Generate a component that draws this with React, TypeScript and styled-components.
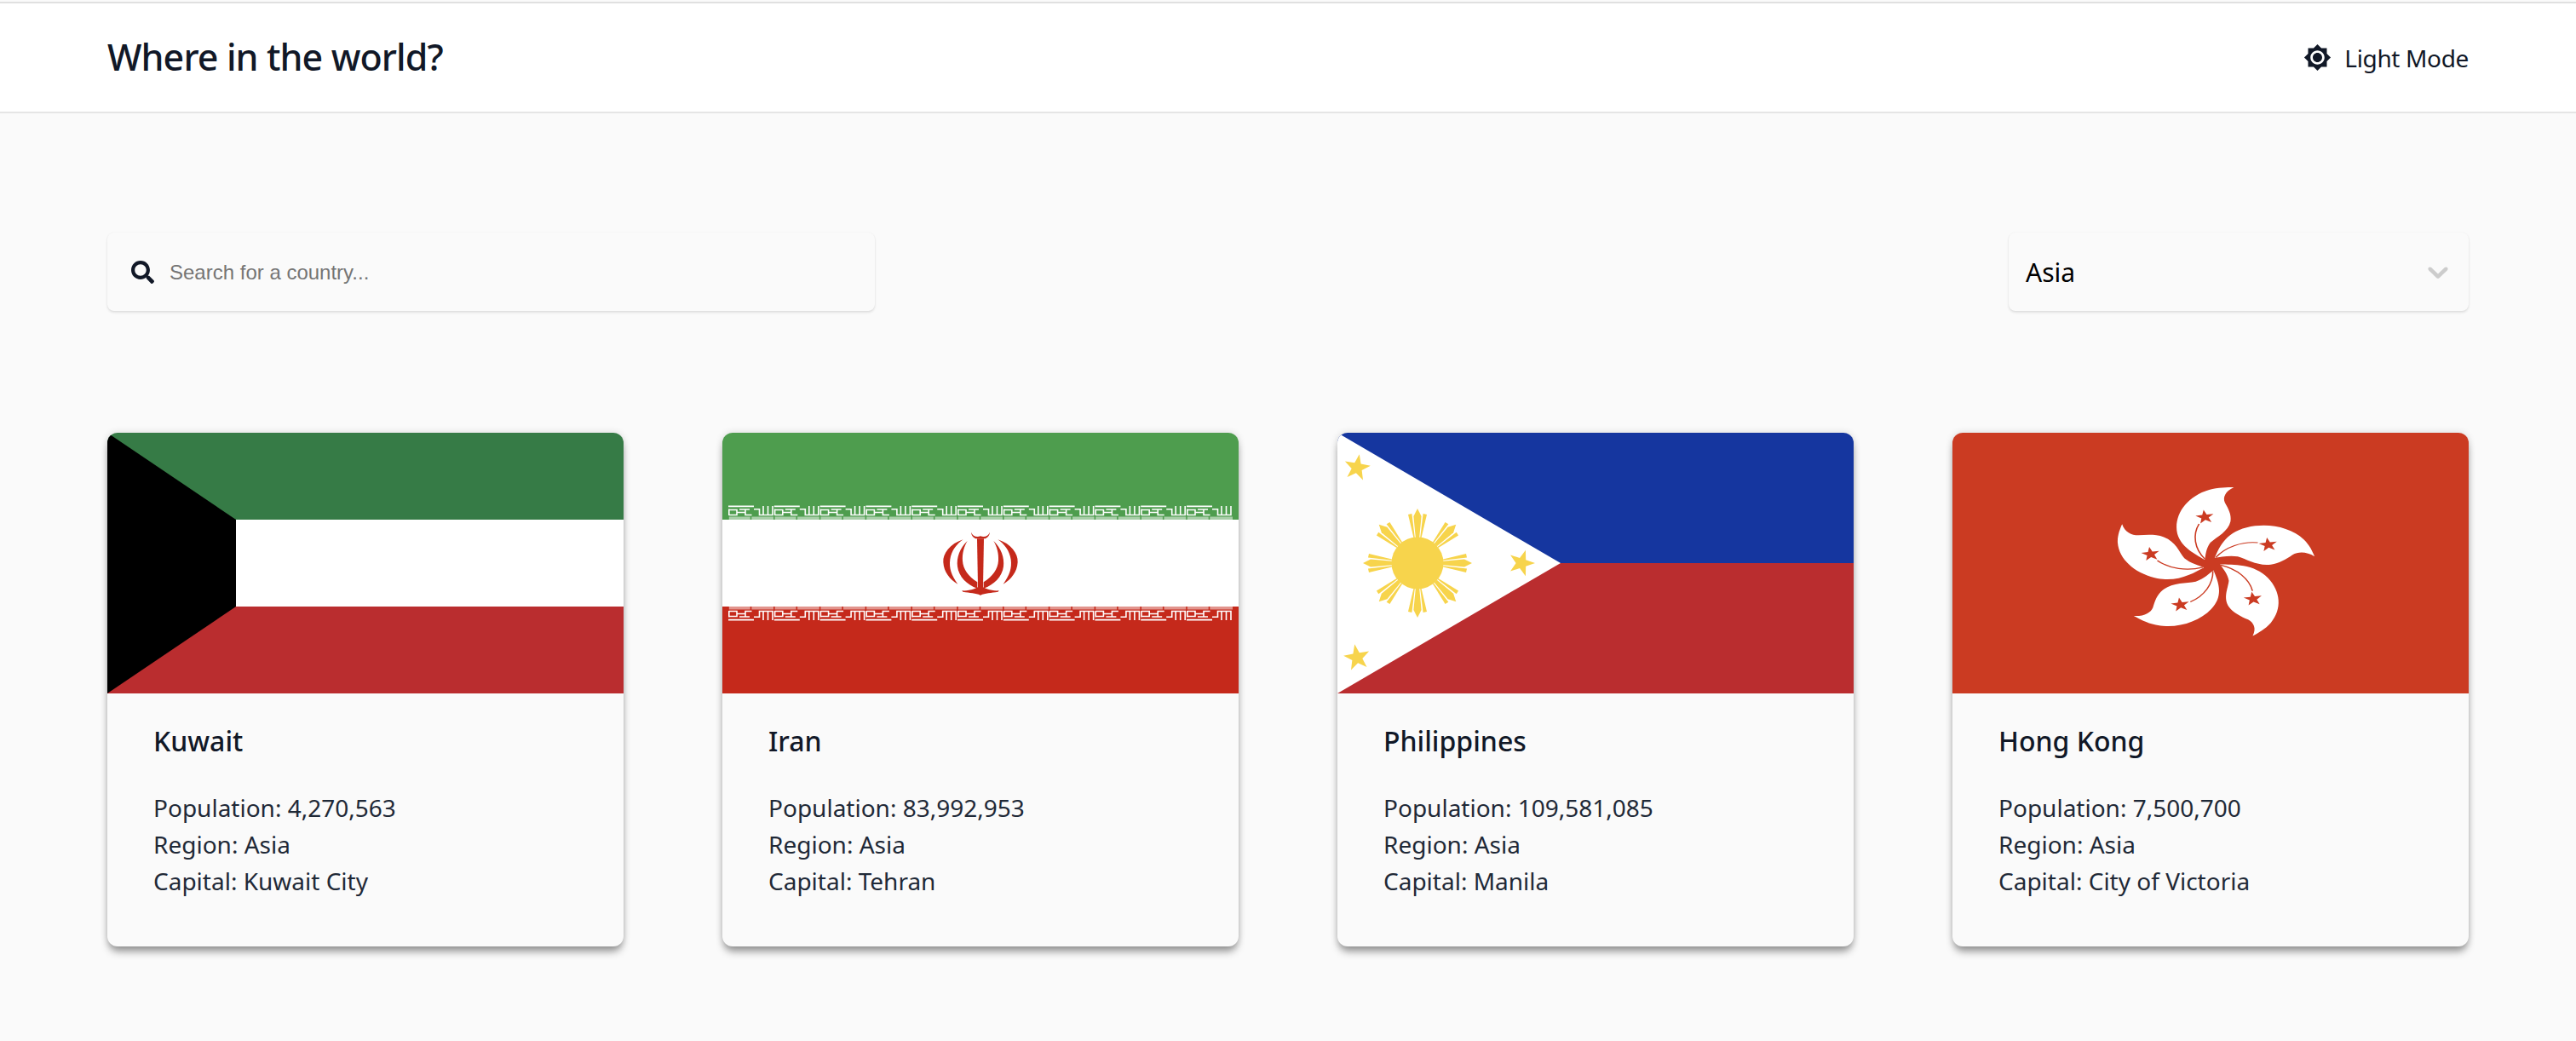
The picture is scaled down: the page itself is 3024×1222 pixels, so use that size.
import React from 'react';
import styled, { createGlobalStyle } from 'styled-components';
import { FaSearch } from 'react-icons/fa';
import { MdBrightness7 } from 'react-icons/md';

const GlobalStyle = createGlobalStyle`
  html, body {
    margin: 0;
    padding: 0;
    background: #fafafa;
  }
  * {
    box-sizing: border-box;
  }
`;

const fontStack = `'Noto Sans', 'Open Sans', sans-serif`;

const Page = styled.div`
  min-height: 1222px;
  background: #fafafa;
  font-family: ${fontStack};
  overflow: hidden;
`;

const Header = styled.header`
  margin-top: 2px;
  height: 131px;
  padding: 0 126px;
  display: flex;
  align-items: center;
  justify-content: space-between;
  background: #fff;
  border-top: 2px solid #e0e0e0;
  border-bottom: 2px solid #e5e5e5;
`;

const Title = styled.h1`
  margin: 0 0 2px;
  font-size: 43px;
  font-weight: 500;
  letter-spacing: -0.9px;
  color: #111827;
`;

const ThemeToggle = styled.div`
  display: flex;
  align-items: center;
  gap: 15px;
  font-size: 28px;
  letter-spacing: -0.35px;
  color: #111827;
`;

const Main = styled.main`
  padding: 140px 126px 0;
`;

const Controls = styled.div`
  display: flex;
  justify-content: space-between;
`;

const SearchBox = styled.div`
  width: 901px;
  height: 92px;
  padding-left: 28px;
  display: flex;
  align-items: center;
  gap: 18px;
  color: #111827;
  border-radius: 8px;
  box-shadow: 0 2px 3px rgba(0, 0, 0, 0.1), 0 0 2px rgba(0, 0, 0, 0.06);
`;

const SearchInput = styled.input`
  flex: 1;
  padding: 2px 0 0;
  border: 0;
  outline: 0;
  background: transparent;
  font-family: 'Liberation Sans', Arial, sans-serif;
  font-size: 24px;
  color: #111827;

  &::placeholder {
    color: #757575;
    opacity: 1;
  }
`;

const RegionSelect = styled.div`
  width: 540px;
  height: 92px;
  padding: 0 16px 0 20px;
  display: flex;
  align-items: center;
  justify-content: space-between;
  font-size: 30px;
  color: #000;
  border-radius: 8px;
  box-shadow: 0 2px 3px rgba(0, 0, 0, 0.1), 0 0 2px rgba(0, 0, 0, 0.06);
`;

const Chevron = styled.svg`
  width: 40px;
  height: 40px;
  fill: #cccccc;
`;

const CardGrid = styled.div`
  margin-top: 143px;
  display: grid;
  grid-template-columns: repeat(4, 606px);
  column-gap: 116px;
`;

const Card = styled.article`
  height: 603px;
  background: #fafafa;
  border-radius: 12px;
  box-shadow: 0 8px 10px -2px rgba(0, 0, 0, 0.38), 0 0 8px rgba(0, 0, 0, 0.14);
  overflow: hidden;
`;

const FlagSvg = styled.svg`
  display: block;
  width: 606px;
  height: 306px;
`;

const CardBody = styled.div`
  padding: 34px 54px 0;
`;

const CardTitle = styled.h2`
  margin: 0 0 35px;
  font-size: 32px;
  line-height: 44px;
  font-weight: 500;
  color: #111827;
`;

const Stat = styled.p`
  margin: 0;
  font-size: 28px;
  line-height: 43px;
  color: #1f2937;
`;

const starPoints = (cx: number, cy: number, r: number, rot = 0) => {
  const pts: string[] = [];
  for (let i = 0; i < 10; i++) {
    const rad = i % 2 === 0 ? r : r * 0.4;
    const a = ((i * 36 + rot - 90) * Math.PI) / 180;
    pts.push(`${(cx + rad * Math.cos(a)).toFixed(2)},${(cy + rad * Math.sin(a)).toFixed(2)}`);
  }
  return pts.join(' ');
};

const KuwaitFlag = () => (
  <FlagSvg viewBox="0 0 606 306">
    <rect width="606" height="102" fill="#367b46" />
    <rect y="102" width="606" height="102" fill="#fff" />
    <rect y="204" width="606" height="102" fill="#ba2d2f" />
    <polygon points="0,0 151,102 151,204 0,306" fill="#000" />
  </FlagSvg>
);

// one unit of the Kufic band on the Iranian flag, mirrored for the red stripe
const Tile = ({ color }: { color: string }) => (
  <>
    <path
      d="M0 1.4H30M0.8 4.5V11.5H10V5.5H0.8M10 8.5H20V11.5H27.5M20 4.5V8.5M13 5H25M30 4.8H36.5V11.5H52V1M41 11.5V1M46.5 11.5V1"
      fill="none"
      stroke="#fff"
      strokeWidth="1.6"
    />
    <path d="M0 15.2H54" stroke="#fff" strokeWidth="3.6" opacity="0.5" />
    <path d="M0 12V17M26.5 13V17" stroke={color} strokeWidth="1.6" />
  </>
);

const IranFlag = () => {
  const tiles = Array.from({ length: 11 }, (_, i) => i);
  return (
    <FlagSvg viewBox="0 0 606 306">
      <rect width="606" height="102" fill="#4e9d4e" />
      <rect y="102" width="606" height="102" fill="#fff" />
      <rect y="204" width="606" height="102" fill="#c5291b" />
      {tiles.map((i) => (
        <g key={`g${i}`} transform={`translate(${7 + i * 53.8} 85)`}>
          <Tile color="#4e9d4e" />
        </g>
      ))}
      {tiles.map((i) => (
        <g key={`r${i}`} transform={`translate(${7 + i * 53.8} 221) scale(1 -1)`}>
          <Tile color="#c5291b" />
        </g>
      ))}
      <g transform="translate(242 92) scale(0.3333)" fill="#c5291b">
        <path d="M171 97L195 97L192 265L183 297L174 265Z" />
        <path d="M118 280C145 282 170 272 183 262C196 272 221 282 248 280L245 284C220 288 200 288 183 296C166 288 146 288 121 284Z" />
        <path d="M150 74C155 88 170 94 183 88C196 94 211 88 216 74C215 85 208 96 196 97L170 97C158 96 151 85 150 74Z" />
        <g>
          <path d="M122 100C75 115 50 150 52 180C54 215 75 240 103 257C80 225 72 200 76 170C80 140 100 115 122 100Z" />
          <path d="M137 105C110 130 98 165 102 195C106 230 135 260 172 272L172 250C140 230 122 205 120 175C118 150 125 125 137 105Z" />
        </g>
        <g transform="translate(366 0) scale(-1 1)">
          <path d="M122 100C75 115 50 150 52 180C54 215 75 240 103 257C80 225 72 200 76 170C80 140 100 115 122 100Z" />
          <path d="M137 105C110 130 98 165 102 195C106 230 135 260 172 272L172 250C140 230 122 205 120 175C118 150 125 125 137 105Z" />
        </g>
      </g>
    </FlagSvg>
  );
};

const PhilippinesFlag = () => (
  <FlagSvg viewBox="0 0 606 306">
    <rect width="606" height="153" fill="#15369f" />
    <rect y="153" width="606" height="153" fill="#ba2d2f" />
    <polygon points="0,0 262,153 0,306" fill="#fff" />
    <g fill="#f7d44c">
      <circle cx="94" cy="153" r="30.5" />
      {[0, 45, 90, 135, 180, 225, 270, 315].map((deg) => (
        <g key={deg} transform={`translate(94 153) rotate(${deg})`}>
          <polygon points="-2.2,-30 -4.6,-55 0,-64 4.6,-55 2.2,-30" />
          <polygon points="-4.6,-30 -11,-57 -6.6,-58 -3.2,-30" />
          <polygon points="4.6,-30 11,-57 6.6,-58 3.2,-30" />
        </g>
      ))}
      <polygon points={starPoints(23, 41, 16, 10)} />
      <polygon points={starPoints(23, 264, 16, -10)} />
      <polygon points={starPoints(216, 153, 16, 90)} />
    </g>
  </FlagSvg>
);

const HongKongFlag = () => (
  <FlagSvg viewBox="0 0 606 306">
    <rect width="606" height="306" fill="#cb3b22" />
    <g transform="translate(304 154) scale(1.32 1)">
      {[0, 72, 144, 216, 288].map((deg) => (
        <g key={deg} transform={`rotate(${deg})`}>
          <path
            d="M-6 -5C-15 -12 -31 -22 -31 -43C-31 -62 -20 -80 -2 -87C6 -90 14 -90 20 -90C12 -85 10 -78 12 -72C15 -65 18 -58 17 -50C15 -38 5 -32 -1 -25C-5 -18 -5 -10 -6 -5Z"
            fill="#fff"
          />
          <polygon points={starPoints(-5.8, -55, 8.5, -8)} fill="#cb3b22" />
          <path d="M-11 -47C-17 -34 -15 -18 -6 -6" fill="none" stroke="#cb3b22" strokeWidth="1.2" />
        </g>
      ))}
    </g>
  </FlagSvg>
);

const countries = [
  { name: 'Kuwait', population: '4,270,563', capital: 'Kuwait City', Flag: KuwaitFlag },
  { name: 'Iran', population: '83,992,953', capital: 'Tehran', Flag: IranFlag },
  { name: 'Philippines', population: '109,581,085', capital: 'Manila', Flag: PhilippinesFlag },
  { name: 'Hong Kong', population: '7,500,700', capital: 'City of Victoria', Flag: HongKongFlag },
];

const App: React.FC = () => {
  return (
    <Page>
      <GlobalStyle />
      <Header>
        <Title>Where in the world?</Title>
        <ThemeToggle>
          <MdBrightness7 size={33} />
          <span>Light Mode</span>
        </ThemeToggle>
      </Header>
      <Main>
        <Controls>
          <SearchBox>
            <FaSearch size={27} />
            <SearchInput placeholder="Search for a country..." />
          </SearchBox>
          <RegionSelect>
            <span>Asia</span>
            <Chevron viewBox="0 0 20 20">
              <path d="M4.516 7.548c0.436-0.446 1.043-0.481 1.576 0l3.908 3.747 3.908-3.747c0.533-0.481 1.141-0.446 1.574 0 0.436 0.445 0.408 1.197 0 1.615-0.406 0.418-4.695 4.502-4.695 4.502-0.217 0.223-0.502 0.335-0.787 0.335s-0.57-0.112-0.789-0.335c0 0-4.287-4.084-4.695-4.502s-0.436-1.17 0-1.615z" />
            </Chevron>
          </RegionSelect>
        </Controls>
        <CardGrid>
          {countries.map(({ name, population, capital, Flag }) => (
            <Card key={name}>
              <Flag />
              <CardBody>
                <CardTitle>{name}</CardTitle>
                <Stat>Population: {population}</Stat>
                <Stat>Region: Asia</Stat>
                <Stat>Capital: {capital}</Stat>
              </CardBody>
            </Card>
          ))}
        </CardGrid>
      </Main>
    </Page>
  );
};

export default App;
